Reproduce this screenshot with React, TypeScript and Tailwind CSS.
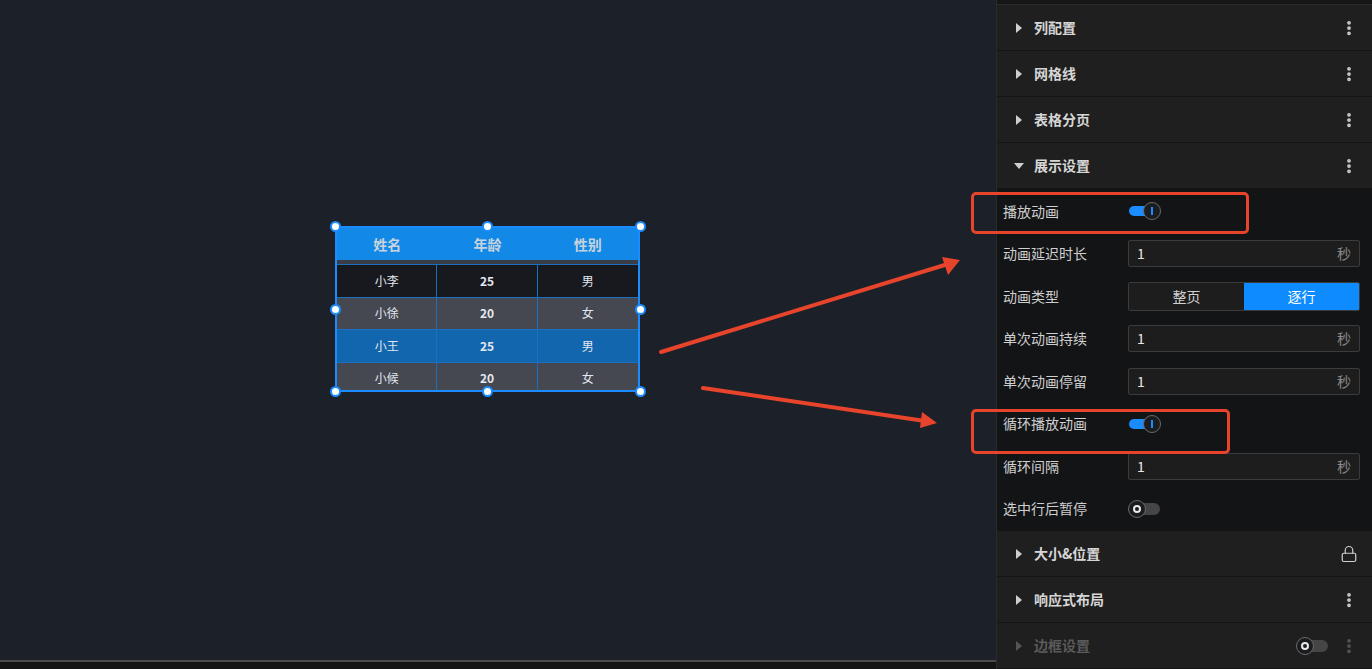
import { Lock, EllipsisVertical } from "lucide-react";

const font = { fontFamily: '"Noto Sans CJK SC", "Noto Sans", sans-serif' };

const Caret = ({ open = false, dim = false }: { open?: boolean; dim?: boolean }) => (
  <svg width="10" height="10" viewBox="0 0 10 10" className="shrink-0">
    {open ? (
      <polygon points="0,2 10,2 5,8" fill={dim ? "#555" : "#cfcfcf"} />
    ) : (
      <polygon points="2,0 8,5 2,10" fill={dim ? "#555" : "#cfcfcf"} />
    )}
  </svg>
);

const Section = ({
  title,
  open = false,
  dim = false,
  right,
}: {
  title: string;
  open?: boolean;
  dim?: boolean;
  right?: React.ReactNode;
}) => (
  <div className="h-[46px] flex items-center pl-[17px] pr-[14px] bg-[#1f1f1f] border-b border-[#151515]">
    <Caret open={open} dim={dim} />
    <span
      className={`ml-[10px] text-[14px] font-bold ${dim ? "text-[#5a5a5a]" : "text-[#d6d6d6]"}`}
    >
      {title}
    </span>
    <div className="ml-auto flex items-center gap-3">
      {right ?? <EllipsisVertical size={18} strokeWidth={3} color={dim ? "#555" : "#cfcfcf"} />}
    </div>
  </div>
);

const ToggleOn = () => (
  <div className="relative w-[32px] h-[18px] flex items-center">
    <div className="h-[10px] w-[22px] rounded-full bg-[#1a8cff]" />
    <div className="absolute right-0 top-0 h-[18px] w-[18px] rounded-full bg-[#1b1c20] border border-[#6a6a6a] flex items-center justify-center">
      <div className="w-[2px] h-[8px] bg-[#1a8cff]" />
    </div>
  </div>
);

const ToggleOff = () => (
  <div className="relative w-[32px] h-[18px] flex items-center">
    <div className="ml-[8px] h-[12px] w-[24px] rounded-full bg-[#454545]" />
    <div className="absolute left-0 top-0 h-[18px] w-[18px] rounded-full bg-[#1b1c20] border border-[#6a6a6a] flex items-center justify-center">
      <div className="w-[8px] h-[8px] rounded-full border-2 border-[#e8e8e8]" />
    </div>
  </div>
);

const SecInput = () => (
  <div className="w-[232px] h-[27px] rounded-[2px] border border-[#3b3b3b] bg-[#1d1d1d] flex items-center px-[8px]">
    <span className="text-[14px] text-[#e8e8e8]">1</span>
    <span className="ml-auto text-[14px] text-[#8a8a8a]">秒</span>
  </div>
);

const Row = ({ label, children }: { label: string; children?: React.ReactNode }) => (
  <div className="h-[42.5px] flex items-center pl-[6px]">
    <span className="w-[125px] text-[14px] text-[#cfcfcf]">{label}</span>
    {children}
  </div>
);

const Handle = ({ x, y }: { x: number; y: number }) => (
  <div
    className="absolute w-[11px] h-[11px] rounded-full bg-white border-2 border-[#1a8cff]"
    style={{ left: x - 5.5, top: y - 5.5 }}
  />
);

const rows = [
  { name: "小李", age: "25", sex: "男", bg: "bg-[#17191e]" },
  { name: "小徐", age: "20", sex: "女", bg: "bg-[#454751]" },
  { name: "小王", age: "25", sex: "男", bg: "bg-[#1166ae]" },
  { name: "小候", age: "20", sex: "女", bg: "bg-[#454751]" },
];

export default function App() {
  return (
    <div className="relative w-[1372px] h-[669px] flex overflow-hidden bg-[#141414]" style={font}>
      {/* canvas */}
      <div className="w-[996px] flex flex-col">
        <div className="relative h-[660px] bg-[#1c2129]">
          <div className="absolute left-[335px] top-[226px] w-[305px] h-[166px] border-2 border-[#1a8cff] overflow-hidden">
            <div className="grid grid-cols-3 h-[32px] bg-[#1289e6] text-[14px] font-bold text-[#c9d3de]">
              <div className="flex items-center justify-center">姓名</div>
              <div className="flex items-center justify-center">年龄</div>
              <div className="flex items-center justify-center">性别</div>
            </div>
            <div className="h-[4px] bg-[#3a3d46]" />
            {rows.map((r, i) => (
              <div
                key={i}
                className={`grid grid-cols-3 h-[32.5px] text-[12px] text-[#e4e8ee] border-t border-[#1a6fbf] first:border-t-0 ${r.bg}`}
              >
                <div className="flex items-center justify-center border-r border-[#1a6fbf]">{r.name}</div>
                <div className="flex items-center justify-center border-r border-[#1a6fbf] font-bold">{r.age}</div>
                <div className="flex items-center justify-center">{r.sex}</div>
              </div>
            ))}
          </div>
          {[
            [335, 226],
            [487, 226],
            [640, 226],
            [335, 309],
            [640, 309],
            [335, 391],
            [487, 391],
            [640, 391],
          ].map(([x, y], i) => (
            <Handle key={i} x={x} y={y} />
          ))}
        </div>
        <div className="h-[2px] bg-[#4b4b4b]" />
        <div className="flex-1 bg-[#141414]" />
      </div>

      {/* right panel */}
      <div className="w-[376px] flex flex-col bg-[#141414] border-l border-[#2a2a2a]">
        <div className="h-[5px] bg-[#161616] border-b border-[#2b2b2b]" />
        <Section title="列配置" />
        <Section title="网格线" />
        <Section title="表格分页" />
        <Section title="展示设置" open />
        <div className="bg-[#131416] py-[1px]">
          <Row label="播放动画">
            <div className="ml-[1px]">
              <ToggleOn />
            </div>
          </Row>
          <Row label="动画延迟时长">
            <SecInput />
          </Row>
          <Row label="动画类型">
            <div className="w-[232px] h-[29px] rounded-[2px] border border-[#3b3b3b] flex overflow-hidden text-[14px]">
              <div className="flex-1 flex items-center justify-center bg-[#1d1d1d] text-[#d0d0d0]">整页</div>
              <div className="flex-1 flex items-center justify-center bg-[#0d8bff] text-white">逐行</div>
            </div>
          </Row>
          <Row label="单次动画持续">
            <SecInput />
          </Row>
          <Row label="单次动画停留">
            <SecInput />
          </Row>
          <Row label="循环播放动画">
            <div className="ml-[1px]">
              <ToggleOn />
            </div>
          </Row>
          <Row label="循环间隔">
            <SecInput />
          </Row>
          <Row label="选中行后暂停">
            <ToggleOff />
          </Row>
        </div>
        <Section title="大小&位置" right={<Lock size={18} strokeWidth={1.6} color="#cfcfcf" />} />
        <Section title="响应式布局" />
        <Section
          title="边框设置"
          dim
          right={
            <>
              <ToggleOff />
              <EllipsisVertical size={18} strokeWidth={3} color="#555" />
            </>
          }
        />
      </div>

      {/* annotations */}
      <div className="absolute left-[971px] top-[192px] w-[278px] h-[42px] rounded-[5px] border-[3px] border-[#e8442c]" />
      <div className="absolute left-[971px] top-[409px] w-[259px] h-[45px] rounded-[5px] border-[3px] border-[#e8442c]" />
      <svg className="absolute left-0 top-0 pointer-events-none" width="1372" height="669">
        <line x1="661" y1="352" x2="948" y2="264" stroke="#e8442c" strokeWidth="4" strokeLinecap="round" />
        <polygon points="960,260 942,257 948,275" fill="#e8442c" />
        <line x1="703" y1="388" x2="925" y2="421" stroke="#e8442c" strokeWidth="4" strokeLinecap="round" />
        <polygon points="937,423 922,412 920,428" fill="#e8442c" />
      </svg>
    </div>
  );
}
